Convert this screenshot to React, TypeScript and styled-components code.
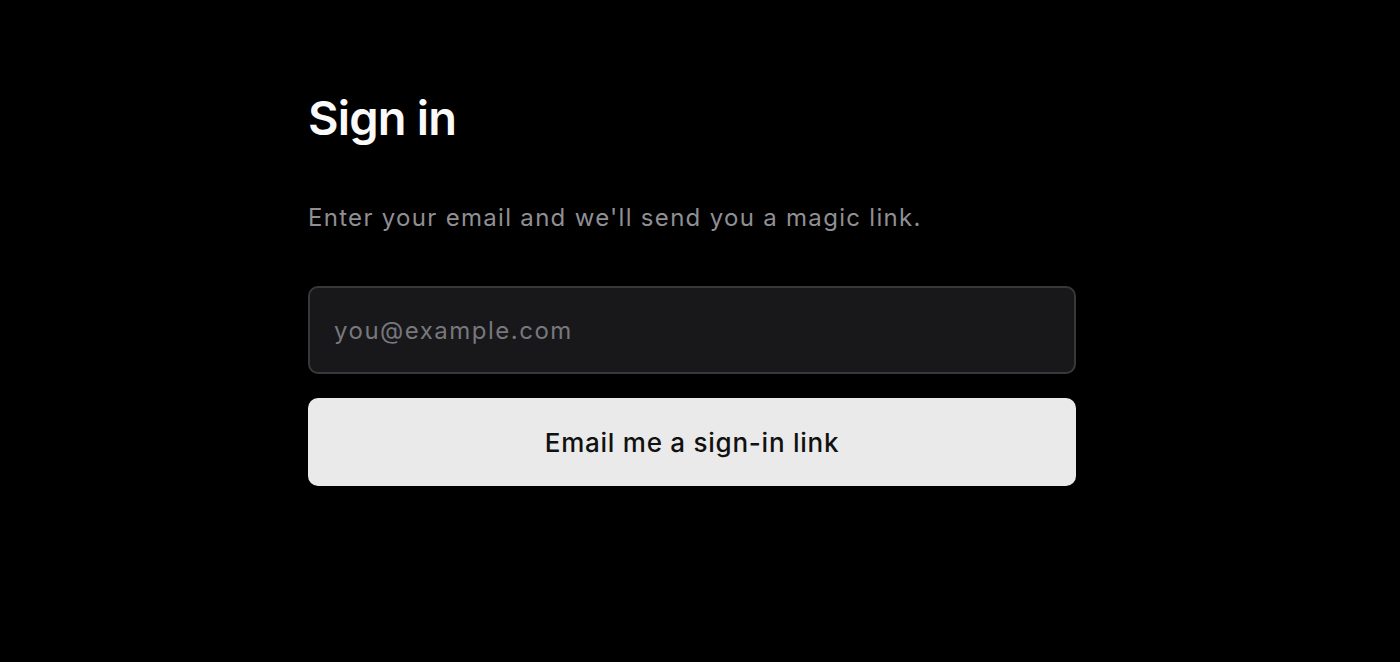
import styled, { createGlobalStyle } from "styled-components";

const GlobalStyle = createGlobalStyle`
  html, body {
    margin: 0;
    padding: 0;
    background: #000;
  }
  body {
    font-family: Inter, "Open Sans", "Liberation Sans", sans-serif;
    -webkit-font-smoothing: antialiased;
  }
`;

const Page = styled.main`
  min-height: 662px;
  background: #000;
  padding-top: 90px;
  box-sizing: border-box;
`;

const Container = styled.div`
  max-width: 784px;
  margin: 0 auto;
  padding-right: 16px;
  box-sizing: border-box;
`;

const Title = styled.h1`
  margin: 0;
  color: #fafafa;
  font-size: 47px;
  font-weight: 600;
  line-height: 1.2;
  letter-spacing: -0.8px;
`;

const Subtitle = styled.p`
  margin: 54px 0 50px;
  color: #8f8f94;
  font-size: 24px;
  line-height: 1.5;
  letter-spacing: 1.3px;
`;

const Form = styled.form`
  display: flex;
  flex-direction: column;
  gap: 24px;
`;

const EmailInput = styled.input`
  height: 88px;
  box-sizing: border-box;
  padding: 0 24px;
  border: 2px solid #38383b;
  border-radius: 10px;
  background: #18181a;
  color: #ededed;
  font-family: inherit;
  font-size: 24px;
  letter-spacing: 1.5px;
  outline: none;

  &::placeholder {
    color: #77777c;
  }
`;

const SubmitButton = styled.button`
  height: 88px;
  border: none;
  border-radius: 10px;
  background: #eaeaea;
  color: #111;
  font-family: inherit;
  font-size: 26px;
  font-weight: 500;
  letter-spacing: 0.75px;
  cursor: pointer;
`;

export default function App() {
  return (
    <>
      <GlobalStyle />
      <Page>
        <Container>
          <Title>Sign in</Title>
          <Subtitle>Enter your email and we'll send you a magic link.</Subtitle>
          <Form onSubmit={(e) => e.preventDefault()}>
            <EmailInput type="email" placeholder="you@example.com" />
            <SubmitButton type="submit">Email me a sign-in link</SubmitButton>
          </Form>
        </Container>
      </Page>
    </>
  );
}
